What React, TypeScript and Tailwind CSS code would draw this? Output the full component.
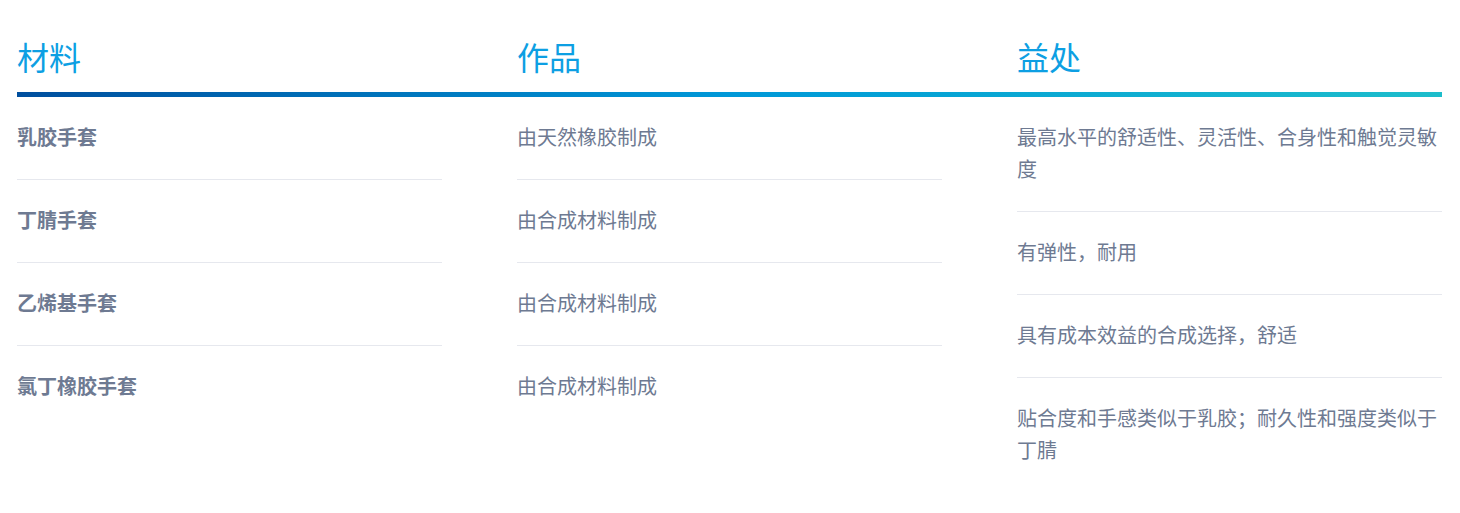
import React from 'react';

const font = { fontFamily: '"Noto Sans CJK SC", "Noto Sans", sans-serif' };

const columns = [
  {
    title: '材料',
    bold: true,
    items: ['乳胶手套', '丁腈手套', '乙烯基手套', '氯丁橡胶手套'],
  },
  {
    title: '作品',
    bold: false,
    items: ['由天然橡胶制成', '由合成材料制成', '由合成材料制成', '由合成材料制成'],
  },
  {
    title: '益处',
    bold: false,
    items: [
      '最高水平的舒适性、灵活性、合身性和触觉灵敏度',
      '有弹性，耐用',
      '具有成本效益的合成选择，舒适',
      '贴合度和手感类似于乳胶；耐久性和强度类似于丁腈',
    ],
  },
];

export default function App() {
  return (
    <div className="min-h-[513px] bg-white px-[17px] pt-[32px]" style={font}>
      <div className="w-[1425px]">
        <div className="grid grid-cols-3 gap-x-[75px]">
          {columns.map((col) => (
            <h2 key={col.title} className="text-[32px] leading-[48px] font-normal text-[#0d9fe3]">
              {col.title}
            </h2>
          ))}
        </div>
        <div className="mt-[12px] h-[5px] bg-gradient-to-r from-[#004f9e] via-[#0098d8] to-[#1dbdcb]" />
        <div className="grid grid-cols-3 gap-x-[75px]">
          {columns.map((col) => (
            <div key={col.title} className="flex flex-col">
              {col.items.map((item, i) => (
                <div
                  key={i}
                  className={
                    'pt-[24px] pb-[26px] text-[20px] leading-[32px] text-[#6e7a92] ' +
                    (col.bold ? 'font-bold ' : '') +
                    (i < col.items.length - 1 ? 'border-b border-[#e6e8ee]' : '')
                  }
                >
                  {item}
                </div>
              ))}
            </div>
          ))}
        </div>
      </div>
    </div>
  );
}
